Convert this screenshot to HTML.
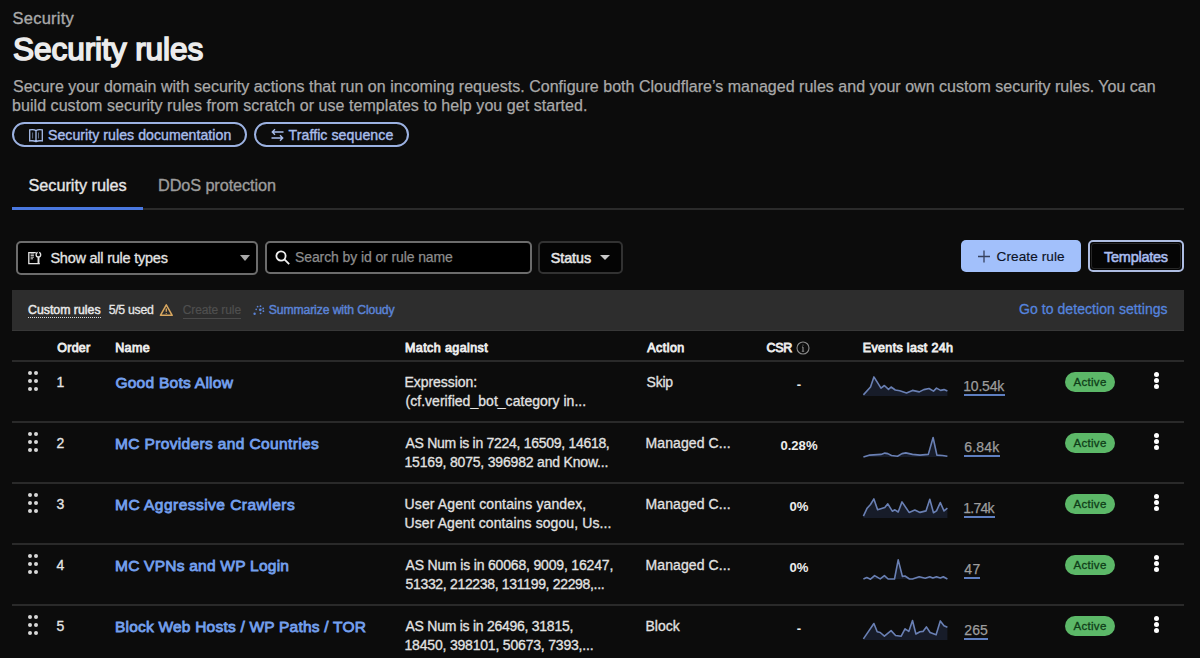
<!DOCTYPE html>
<html><head><meta charset="utf-8">
<style>
*{box-sizing:border-box;margin:0;padding:0}
html,body{width:1200px;height:658px;overflow:hidden;background:#0c0c0c;font-family:"Liberation Sans",sans-serif}
.a{position:absolute;white-space:pre;line-height:1}
.ab{position:absolute}
.hline{position:absolute;left:12px;width:1172px;height:2px;background:#2a2a2a}
.uline{position:absolute;height:2px;background:#5f7fc0}
.badge{position:absolute;left:1065px;width:50px;height:20px;border-radius:10px;background:#5cb868}
.dot{position:absolute;width:5px;height:5px;border-radius:50%;background:#fff}
.hd{position:absolute;width:4px;height:4px;border-radius:50%;background:#d8d8d8}
</style></head><body>
<div class="ab" style="left:12px;top:122px;width:235px;height:25px;border:2px solid #9cb2e2;border-radius:13px"></div>
<div class="ab" style="left:254px;top:122px;width:155px;height:25px;border:2px solid #9cb2e2;border-radius:13px"></div>
<svg class="ab" style="left:28px;top:127.5px" width="16" height="15" viewBox="0 0 16 15" fill="none" stroke="#a8bdeb" stroke-width="1.3"><path d="M8 2.6C6.6 1.6 4 1.5 1.7 1.9V12.9C4 12.6 6.6 12.8 8 13.6C9.4 12.8 12 12.6 14.3 12.9V1.9C12 1.5 9.4 1.6 8 2.6zM8 2.6V13.6"/><path d="M4.6 4.5v6M10.5 4.5v6" stroke-width="0.9" opacity="0.6"/></svg>
<svg class="ab" style="left:270px;top:127.5px" width="15" height="14" viewBox="0 0 15 14" fill="none" stroke="#a8bdeb" stroke-width="1.4"><path d="M2.5 4h11M5 1.3L2.3 4 5 6.7M12.5 10H1.5M10 7.3L12.7 10 10 12.7"/></svg>
<div class="ab" style="left:12px;top:207.5px;width:1172px;height:2px;background:#2b2b2b"></div>
<div class="ab" style="left:12px;top:207px;width:131px;height:2.5px;background:#4a78e0"></div>
<div class="ab" style="left:16px;top:240.5px;width:242px;height:34.5px;border:2px solid #6c6c6c;border-radius:5px;background:#000"></div>
<svg class="ab" style="left:20px;top:245px" width="30" height="25" viewBox="0 0 30 25" fill="none" stroke="#e2e2e2" stroke-width="1.3"><path d="M15.8 7.7H8.8V18.6H19.8"/><path d="M10.6 9h3.3M10.6 10.6h3.3M10.6 12.2h3.3M10.6 13.8h2.4" stroke-width="0.9"/><circle cx="18.4" cy="9.7" r="2.3"/><path d="M18.5 12v6.4" stroke-width="1.9"/><path d="M18.4 6.6v2.2" stroke="#000" stroke-width="1.4"/></svg>
<div class="ab" style="left:240px;top:255px;width:0;height:0;border-left:5px solid transparent;border-right:5px solid transparent;border-top:6px solid #a8a8a8"></div>
<div class="ab" style="left:265px;top:240.5px;width:267px;height:33.5px;border:2px solid #6c6c6c;border-radius:5px;background:#000"></div>
<svg class="ab" style="left:274px;top:249px" width="18" height="18" viewBox="0 0 18 18" fill="none" stroke="#f0f0f0" stroke-width="1.8"><circle cx="7" cy="7" r="4.6"/><path d="M10.4 10.4l4.8 4.8"/></svg>
<div class="ab" style="left:538px;top:240.5px;width:84.5px;height:33.5px;border:2px solid #323232;border-radius:5px;background:#040404"></div>
<div class="ab" style="left:599.5px;top:255px;width:0;height:0;border-left:5px solid transparent;border-right:5px solid transparent;border-top:5.5px solid #c8c8c8"></div>
<div class="ab" style="left:960.5px;top:240px;width:120px;height:32px;background:#a2c0fb;border-radius:5px"></div>
<svg class="ab" style="left:977px;top:250px" width="14" height="13" viewBox="0 0 14 13" stroke="#36415e" stroke-width="1.3"><path d="M7 0.5v12M1 6.5h12"/></svg>
<div class="ab" style="left:1088px;top:240px;width:96px;height:32px;border:2px solid #aebde2;border-radius:5px;background:#050505"><div class="ab" style="inset:1px;border:1px solid #262626;border-radius:3px"></div></div>
<div class="ab" style="left:12px;top:290px;width:1172px;height:41px;background:#2d2d2d;border-bottom:1px solid #383838"></div>
<div class="ab" style="left:28px;top:316.5px;width:73px;height:0;border-top:1.5px dotted #d8d8d8"></div>
<svg class="ab" style="left:159px;top:303px" width="15" height="14" viewBox="0 0 15 14" fill="none" stroke="#d9a860" stroke-width="1.5" stroke-linejoin="round"><path d="M7.3 1.8L13.2 12.3H1.4z"/><path d="M7.3 5.6v3.2M7.3 9.9v0.8" stroke-width="1.3"/></svg>
<div class="ab" style="left:182.5px;top:318px;width:58.5px;height:1px;background:#4a4a4a"></div>
<svg class="ab" style="left:253px;top:304.5px" width="12" height="11" viewBox="0 0 12 11" fill="#5b83d6"><circle cx="4.6" cy="1.6" r="0.9"/><circle cx="7.5" cy="1.2" r="0.9"/><circle cx="10.2" cy="3.4" r="0.9"/><circle cx="10.4" cy="6.2" r="0.9"/><circle cx="7.6" cy="8.3" r="0.9"/><circle cx="3.2" cy="4.4" r="0.8"/><circle cx="7.3" cy="4.8" r="1.4"/><circle cx="1.6" cy="8.8" r="1.2"/></svg>
<svg class="ab" style="left:796px;top:340.5px" width="14" height="14" viewBox="0 0 14 14" fill="none" stroke="#8a8a8a" stroke-width="1.1"><circle cx="7" cy="7" r="6"/><path d="M7 6v4.3M5.8 10.3h2.4M6 6h1"/><circle cx="7" cy="4" r="0.6" fill="#8a8a8a" stroke="none"/></svg>
<div class="hline" style="top:360px"></div>
<div class="hd" style="left:28px;top:371px"></div>
<div class="hd" style="left:28px;top:379px"></div>
<div class="hd" style="left:28px;top:387px"></div>
<div class="hd" style="left:34px;top:371px"></div>
<div class="hd" style="left:34px;top:379px"></div>
<div class="hd" style="left:34px;top:387px"></div>
<svg class="ab" style="left:863px;top:376px;overflow:visible" width="86" height="21" viewBox="0 0 86 21"><polygon points="0.4,20 0.4,18.9 7.5,11.0 10.9,0.9 18.0,12.1 21.4,9.5 25.5,13.3 28.1,11.0 32.3,14.0 36.8,14.8 43.5,17.0 49.5,14.4 56.3,15.9 60.8,13.6 66.0,12.5 70.5,15.1 73.5,12.1 77.6,14.4 81.0,13.6 84.4,15.1 84.4,20" fill="#171c29"/><polyline points="0.4,18.9 7.5,11.0 10.9,0.9 18.0,12.1 21.4,9.5 25.5,13.3 28.1,11.0 32.3,14.0 36.8,14.8 43.5,17.0 49.5,14.4 56.3,15.9 60.8,13.6 66.0,12.5 70.5,15.1 73.5,12.1 77.6,14.4 81.0,13.6 84.4,15.1" fill="none" stroke="#6a80b4" stroke-width="1.6" stroke-linejoin="round"/></svg>
<div class="uline" style="left:964px;top:394.25px;width:40.9px"></div>
<div class="badge" style="top:372px"></div>
<div class="dot" style="left:1153.75px;top:372px"></div>
<div class="dot" style="left:1153.75px;top:378.25px"></div>
<div class="dot" style="left:1153.75px;top:384.25px"></div>
<div class="hline" style="top:421px"></div>
<div class="a" style="left:739px;width:120px;text-align:center;top:378px;font-size:13.1px;font-weight:700;color:#ececec">-</div>
<div class="hd" style="left:28px;top:432px"></div>
<div class="hd" style="left:28px;top:440px"></div>
<div class="hd" style="left:28px;top:448px"></div>
<div class="hd" style="left:34px;top:432px"></div>
<div class="hd" style="left:34px;top:440px"></div>
<div class="hd" style="left:34px;top:448px"></div>
<svg class="ab" style="left:863px;top:437px;overflow:visible" width="86" height="21" viewBox="0 0 86 21"><polygon points="0.4,20 0.4,20.0 6.8,18.1 18.0,17.4 21.8,16.1 24.8,16.6 28.5,18.5 34.5,19.2 39.0,16.6 42.8,15.9 49.5,17.4 57.0,18.1 65.3,17.4 70.1,0.5 73.9,18.1 79.5,18.5 84.4,19.2 84.4,20" fill="#171c29"/><polyline points="0.4,20.0 6.8,18.1 18.0,17.4 21.8,16.1 24.8,16.6 28.5,18.5 34.5,19.2 39.0,16.6 42.8,15.9 49.5,17.4 57.0,18.1 65.3,17.4 70.1,0.5 73.9,18.1 79.5,18.5 84.4,19.2" fill="none" stroke="#6a80b4" stroke-width="1.6" stroke-linejoin="round"/></svg>
<div class="uline" style="left:964px;top:455.25px;width:35.5px"></div>
<div class="badge" style="top:433px"></div>
<div class="dot" style="left:1153.75px;top:433px"></div>
<div class="dot" style="left:1153.75px;top:439.25px"></div>
<div class="dot" style="left:1153.75px;top:445.25px"></div>
<div class="hline" style="top:482px"></div>
<div class="a" style="left:739px;width:120px;text-align:center;top:439px;font-size:13.1px;font-weight:700;color:#ececec">0.28%</div>
<div class="hd" style="left:28px;top:493px"></div>
<div class="hd" style="left:28px;top:501px"></div>
<div class="hd" style="left:28px;top:509px"></div>
<div class="hd" style="left:34px;top:493px"></div>
<div class="hd" style="left:34px;top:501px"></div>
<div class="hd" style="left:34px;top:509px"></div>
<svg class="ab" style="left:863px;top:498px;overflow:visible" width="86" height="21" viewBox="0 0 86 21"><polygon points="0.4,20 0.4,18.1 4.1,10.2 7.5,6.5 10.9,0.9 14.6,11.8 21.8,9.5 24.8,5.8 29.3,13.2 31.9,11.8 35.2,14.0 39.0,3.9 46.1,14.4 51.8,12.1 57.0,14.4 63.0,12.9 66.8,1.2 70.5,14.8 73.5,12.9 77.3,4.6 81.0,12.9 84.4,10.2 84.4,20" fill="#171c29"/><polyline points="0.4,18.1 4.1,10.2 7.5,6.5 10.9,0.9 14.6,11.8 21.8,9.5 24.8,5.8 29.3,13.2 31.9,11.8 35.2,14.0 39.0,3.9 46.1,14.4 51.8,12.1 57.0,14.4 63.0,12.9 66.8,1.2 70.5,14.8 73.5,12.9 77.3,4.6 81.0,12.9 84.4,10.2" fill="none" stroke="#6a80b4" stroke-width="1.6" stroke-linejoin="round"/></svg>
<div class="uline" style="left:964px;top:516.25px;width:31.2px"></div>
<div class="badge" style="top:494px"></div>
<div class="dot" style="left:1153.75px;top:494px"></div>
<div class="dot" style="left:1153.75px;top:500.25px"></div>
<div class="dot" style="left:1153.75px;top:506.25px"></div>
<div class="hline" style="top:543px"></div>
<div class="a" style="left:739px;width:120px;text-align:center;top:500px;font-size:13.1px;font-weight:700;color:#ececec">0%</div>
<div class="hd" style="left:28px;top:554px"></div>
<div class="hd" style="left:28px;top:562px"></div>
<div class="hd" style="left:28px;top:570px"></div>
<div class="hd" style="left:34px;top:554px"></div>
<div class="hd" style="left:34px;top:562px"></div>
<div class="hd" style="left:34px;top:570px"></div>
<svg class="ab" style="left:863px;top:559px;overflow:visible" width="86" height="21" viewBox="0 0 86 21"><polygon points="0.4,20 0.4,20.0 3.8,18.5 7.5,20.2 11.6,16.6 17.2,19.9 21.4,16.6 25.1,20.0 31.5,20.0 35.2,0.9 39.4,17.4 42.0,17.0 46.5,20.0 49.5,20.0 56.2,17.8 62.2,19.2 66.8,17.8 69.8,18.9 73.5,17.8 77.3,18.9 80.3,17.8 84.4,20.0 84.4,20" fill="#171c29"/><polyline points="0.4,20.0 3.8,18.5 7.5,20.2 11.6,16.6 17.2,19.9 21.4,16.6 25.1,20.0 31.5,20.0 35.2,0.9 39.4,17.4 42.0,17.0 46.5,20.0 49.5,20.0 56.2,17.8 62.2,19.2 66.8,17.8 69.8,18.9 73.5,17.8 77.3,18.9 80.3,17.8 84.4,20.0" fill="none" stroke="#6a80b4" stroke-width="1.6" stroke-linejoin="round"/></svg>
<div class="uline" style="left:964px;top:577.25px;width:16.4px"></div>
<div class="badge" style="top:555px"></div>
<div class="dot" style="left:1153.75px;top:555px"></div>
<div class="dot" style="left:1153.75px;top:561.25px"></div>
<div class="dot" style="left:1153.75px;top:567.25px"></div>
<div class="hline" style="top:604px"></div>
<div class="a" style="left:739px;width:120px;text-align:center;top:561px;font-size:13.1px;font-weight:700;color:#ececec">0%</div>
<div class="hd" style="left:28px;top:615px"></div>
<div class="hd" style="left:28px;top:623px"></div>
<div class="hd" style="left:28px;top:631px"></div>
<div class="hd" style="left:34px;top:615px"></div>
<div class="hd" style="left:34px;top:623px"></div>
<div class="hd" style="left:34px;top:631px"></div>
<svg class="ab" style="left:863px;top:620px;overflow:visible" width="86" height="21" viewBox="0 0 86 21"><polygon points="0.4,20 0.4,18.9 10.9,3.5 14.2,11.8 17.2,12.5 21.4,16.2 28.1,10.6 32.6,15.5 38.2,16.2 42.0,8.8 45.8,11.4 49.5,0.5 52.9,14.0 57.0,11.8 60.0,11.4 63.4,6.9 67.1,12.5 73.1,14.8 77.3,0.9 81.0,5.8 84.4,7.2 84.4,20" fill="#171c29"/><polyline points="0.4,18.9 10.9,3.5 14.2,11.8 17.2,12.5 21.4,16.2 28.1,10.6 32.6,15.5 38.2,16.2 42.0,8.8 45.8,11.4 49.5,0.5 52.9,14.0 57.0,11.8 60.0,11.4 63.4,6.9 67.1,12.5 73.1,14.8 77.3,0.9 81.0,5.8 84.4,7.2" fill="none" stroke="#6a80b4" stroke-width="1.6" stroke-linejoin="round"/></svg>
<div class="uline" style="left:964px;top:638.25px;width:24.0px"></div>
<div class="badge" style="top:616px"></div>
<div class="dot" style="left:1153.75px;top:616px"></div>
<div class="dot" style="left:1153.75px;top:622.25px"></div>
<div class="dot" style="left:1153.75px;top:628.25px"></div>
<div class="a" style="left:739px;width:120px;text-align:center;top:622px;font-size:13.1px;font-weight:700;color:#ececec">-</div>
<div class="a" style="left:12.50px;top:9.75px;font-size:16.5px;color:#a9a9a9;-webkit-text-stroke:0.35px #a9a9a9;letter-spacing:0.250px;">Security</div>
<div class="a" style="left:13.00px;top:34.20px;font-size:31.6px;color:#ececec;-webkit-text-stroke:1.6px #ececec;letter-spacing:-0.085px;">Security rules</div>
<div class="a" style="left:13.00px;top:78.60px;font-size:16px;color:#a9a9a9;-webkit-text-stroke:0.25px #a9a9a9;letter-spacing:0.018px;">Secure your domain with security actions that run on incoming requests. Configure both Cloudflare’s managed rules and your own custom security rules. You can</div>
<div class="a" style="left:12.00px;top:97.80px;font-size:16px;color:#a9a9a9;-webkit-text-stroke:0.25px #a9a9a9;letter-spacing:0.056px;">build custom security rules from scratch or use templates to help you get started.</div>
<div class="a" style="left:48.00px;top:127.50px;font-size:14.1px;color:#a8bdeb;-webkit-text-stroke:0.4px #a8bdeb;letter-spacing:0.056px;">Security rules documentation</div>
<div class="a" style="left:288.50px;top:127.50px;font-size:14.1px;color:#a8bdeb;-webkit-text-stroke:0.4px #a8bdeb;letter-spacing:0.087px;">Traffic sequence</div>
<div class="a" style="left:28.50px;top:177.20px;font-size:16.3px;color:#e6e6e6;-webkit-text-stroke:0.35px #e6e6e6;letter-spacing:-0.038px;">Security rules</div>
<div class="a" style="left:158.00px;top:177.20px;font-size:16.3px;color:#9c9c9c;-webkit-text-stroke:0.35px #9c9c9c;letter-spacing:-0.107px;">DDoS protection</div>
<div class="a" style="left:50.40px;top:250.60px;font-size:14.5px;color:#e4e4e4;-webkit-text-stroke:0.3px #e4e4e4;letter-spacing:-0.233px;">Show all rule types</div>
<div class="a" style="left:295.00px;top:250.20px;font-size:14px;color:#8c8c8c;-webkit-text-stroke:0.25px #8c8c8c;letter-spacing:-0.100px;">Search by id or rule name</div>
<div class="a" style="left:550.70px;top:250.60px;font-size:14.3px;color:#e6e6e6;-webkit-text-stroke:0.55px #e6e6e6;letter-spacing:-0.020px;">Status</div>
<div class="a" style="left:996.60px;top:250.40px;font-size:13.6px;color:#0d1326;-webkit-text-stroke:0.15px #0d1326;letter-spacing:0.070px;">Create rule</div>
<div class="a" style="left:1104.00px;top:250.00px;font-size:14.5px;color:#a9bdf0;-webkit-text-stroke:0.55px #a9bdf0;letter-spacing:-0.250px;">Templates</div>
<div class="a" style="left:28.00px;top:303.70px;font-size:12.3px;color:#e8e8e8;-webkit-text-stroke:0.5px #e8e8e8;letter-spacing:0.009px;">Custom rules</div>
<div class="a" style="left:108.70px;top:303.70px;font-size:12.3px;color:#e6e6e6;-webkit-text-stroke:0.3px #e6e6e6;letter-spacing:-0.300px;">5/5 used</div>
<div class="a" style="left:182.70px;top:304.00px;font-size:12px;color:#4f4f4f;-webkit-text-stroke:0.2px #4f4f4f;letter-spacing:-0.100px;">Create rule</div>
<div class="a" style="left:268.70px;top:303.80px;font-size:12.2px;color:#5b83d6;-webkit-text-stroke:0.45px #5b83d6;letter-spacing:-0.105px;">Summarize with Cloudy</div>
<div class="a" style="left:1019.00px;top:302.00px;font-size:14px;color:#5584de;-webkit-text-stroke:0.3px #5584de;letter-spacing:0.065px;">Go to detection settings</div>
<div class="a" style="left:57.30px;top:342.20px;font-size:12.5px;color:#ececec;-webkit-text-stroke:0.85px #ececec;letter-spacing:0.225px;">Order</div>
<div class="a" style="left:115.20px;top:342.20px;font-size:12.5px;color:#ececec;-webkit-text-stroke:0.85px #ececec;letter-spacing:0.400px;">Name</div>
<div class="a" style="left:405.00px;top:342.20px;font-size:12.5px;color:#ececec;-webkit-text-stroke:0.85px #ececec;letter-spacing:0.408px;">Match against</div>
<div class="a" style="left:647.25px;top:342.20px;font-size:12.5px;color:#ececec;-webkit-text-stroke:0.85px #ececec;letter-spacing:0.450px;">Action</div>
<div class="a" style="left:766.50px;top:342.20px;font-size:12.5px;color:#ececec;-webkit-text-stroke:0.85px #ececec;letter-spacing:-0.250px;">CSR</div>
<div class="a" style="left:862.80px;top:342.20px;font-size:12.5px;color:#ececec;-webkit-text-stroke:0.85px #ececec;letter-spacing:0.336px;">Events last 24h</div>
<div class="a" style="left:56.50px;top:374.70px;font-size:14px;color:#e6e6e6;-webkit-text-stroke:0.3px #e6e6e6;">1</div>
<div class="a" style="left:115.40px;top:375.30px;font-size:15.5px;color:#74a0ee;-webkit-text-stroke:0.8px #74a0ee;letter-spacing:0.271px;">Good Bots Allow</div>
<div class="a" style="left:404.50px;top:374.70px;font-size:14px;color:#e2e2e2;-webkit-text-stroke:0.3px #e2e2e2;letter-spacing:-0.050px;">Expression:</div>
<div class="a" style="left:405.50px;top:393.80px;font-size:14px;color:#e2e2e2;-webkit-text-stroke:0.3px #e2e2e2;letter-spacing:0.030px;">(cf.verified_bot_category in...</div>
<div class="a" style="left:646.50px;top:374.70px;font-size:14px;color:#e2e2e2;-webkit-text-stroke:0.3px #e2e2e2;letter-spacing:-0.200px;">Skip</div>
<div class="a" style="left:963.25px;top:379.25px;font-size:14px;color:#9d9d9d;-webkit-text-stroke:0.25px #9d9d9d;letter-spacing:-0.210px;">10.54k</div>
<div class="a" style="left:1073.50px;top:377.25px;font-size:11.5px;color:#0f3d18;-webkit-text-stroke:0.3px #0f3d18;letter-spacing:0.300px;">Active</div>
<div class="a" style="left:56.50px;top:435.70px;font-size:14px;color:#e6e6e6;-webkit-text-stroke:0.3px #e6e6e6;">2</div>
<div class="a" style="left:115.00px;top:436.30px;font-size:15.5px;color:#74a0ee;-webkit-text-stroke:0.8px #74a0ee;letter-spacing:0.360px;">MC Providers and Countries</div>
<div class="a" style="left:405.50px;top:435.70px;font-size:14px;color:#e2e2e2;-webkit-text-stroke:0.3px #e2e2e2;letter-spacing:-0.290px;">AS Num is in 7224, 16509, 14618,</div>
<div class="a" style="left:404.50px;top:454.80px;font-size:14px;color:#e2e2e2;-webkit-text-stroke:0.3px #e2e2e2;letter-spacing:-0.183px;">15169, 8075, 396982 and Know...</div>
<div class="a" style="left:645.50px;top:435.70px;font-size:14px;color:#e2e2e2;-webkit-text-stroke:0.3px #e2e2e2;letter-spacing:0.091px;">Managed C...</div>
<div class="a" style="left:964.25px;top:440.25px;font-size:14px;color:#9d9d9d;-webkit-text-stroke:0.25px #9d9d9d;letter-spacing:0.188px;">6.84k</div>
<div class="a" style="left:1073.50px;top:438.25px;font-size:11.5px;color:#0f3d18;-webkit-text-stroke:0.3px #0f3d18;letter-spacing:0.300px;">Active</div>
<div class="a" style="left:56.50px;top:496.70px;font-size:14px;color:#e6e6e6;-webkit-text-stroke:0.3px #e6e6e6;">3</div>
<div class="a" style="left:115.00px;top:497.30px;font-size:15.5px;color:#74a0ee;-webkit-text-stroke:0.8px #74a0ee;letter-spacing:0.476px;">MC Aggressive Crawlers</div>
<div class="a" style="left:404.50px;top:496.70px;font-size:14px;color:#e2e2e2;-webkit-text-stroke:0.3px #e2e2e2;letter-spacing:0.135px;">User Agent contains yandex,</div>
<div class="a" style="left:404.50px;top:515.80px;font-size:14px;color:#e2e2e2;-webkit-text-stroke:0.3px #e2e2e2;letter-spacing:0.097px;">User Agent contains sogou, Us...</div>
<div class="a" style="left:645.50px;top:496.70px;font-size:14px;color:#e2e2e2;-webkit-text-stroke:0.3px #e2e2e2;letter-spacing:0.091px;">Managed C...</div>
<div class="a" style="left:963.25px;top:501.25px;font-size:14px;color:#9d9d9d;-webkit-text-stroke:0.25px #9d9d9d;letter-spacing:-0.750px;">1.74k</div>
<div class="a" style="left:1073.50px;top:499.25px;font-size:11.5px;color:#0f3d18;-webkit-text-stroke:0.3px #0f3d18;letter-spacing:0.300px;">Active</div>
<div class="a" style="left:56.50px;top:557.70px;font-size:14px;color:#e6e6e6;-webkit-text-stroke:0.3px #e6e6e6;">4</div>
<div class="a" style="left:115.00px;top:558.30px;font-size:15.5px;color:#74a0ee;-webkit-text-stroke:0.8px #74a0ee;letter-spacing:0.237px;">MC VPNs and WP Login</div>
<div class="a" style="left:405.50px;top:557.70px;font-size:14px;color:#e2e2e2;-webkit-text-stroke:0.3px #e2e2e2;letter-spacing:-0.177px;">AS Num is in 60068, 9009, 16247,</div>
<div class="a" style="left:405.50px;top:576.80px;font-size:14px;color:#e2e2e2;-webkit-text-stroke:0.3px #e2e2e2;letter-spacing:-0.323px;">51332, 212238, 131199, 22298,...</div>
<div class="a" style="left:645.50px;top:557.70px;font-size:14px;color:#e2e2e2;-webkit-text-stroke:0.3px #e2e2e2;letter-spacing:0.091px;">Managed C...</div>
<div class="a" style="left:964.25px;top:562.25px;font-size:14px;color:#9d9d9d;-webkit-text-stroke:0.25px #9d9d9d;letter-spacing:0.450px;">47</div>
<div class="a" style="left:1073.50px;top:560.25px;font-size:11.5px;color:#0f3d18;-webkit-text-stroke:0.3px #0f3d18;letter-spacing:0.300px;">Active</div>
<div class="a" style="left:56.50px;top:618.70px;font-size:14px;color:#e6e6e6;-webkit-text-stroke:0.3px #e6e6e6;">5</div>
<div class="a" style="left:115.00px;top:619.30px;font-size:15.5px;color:#74a0ee;-webkit-text-stroke:0.8px #74a0ee;letter-spacing:0.210px;">Block Web Hosts / WP Paths / TOR</div>
<div class="a" style="left:405.50px;top:618.70px;font-size:14px;color:#e2e2e2;-webkit-text-stroke:0.3px #e2e2e2;letter-spacing:-0.260px;">AS Num is in 26496, 31815,</div>
<div class="a" style="left:404.50px;top:637.80px;font-size:14px;color:#e2e2e2;-webkit-text-stroke:0.3px #e2e2e2;letter-spacing:-0.190px;">18450, 398101, 50673, 7393,...</div>
<div class="a" style="left:645.50px;top:618.70px;font-size:14px;color:#e2e2e2;-webkit-text-stroke:0.3px #e2e2e2;">Block</div>
<div class="a" style="left:964.25px;top:623.25px;font-size:14px;color:#9d9d9d;-webkit-text-stroke:0.25px #9d9d9d;letter-spacing:0.125px;">265</div>
<div class="a" style="left:1073.50px;top:621.25px;font-size:11.5px;color:#0f3d18;-webkit-text-stroke:0.3px #0f3d18;letter-spacing:0.300px;">Active</div>
</body></html>
